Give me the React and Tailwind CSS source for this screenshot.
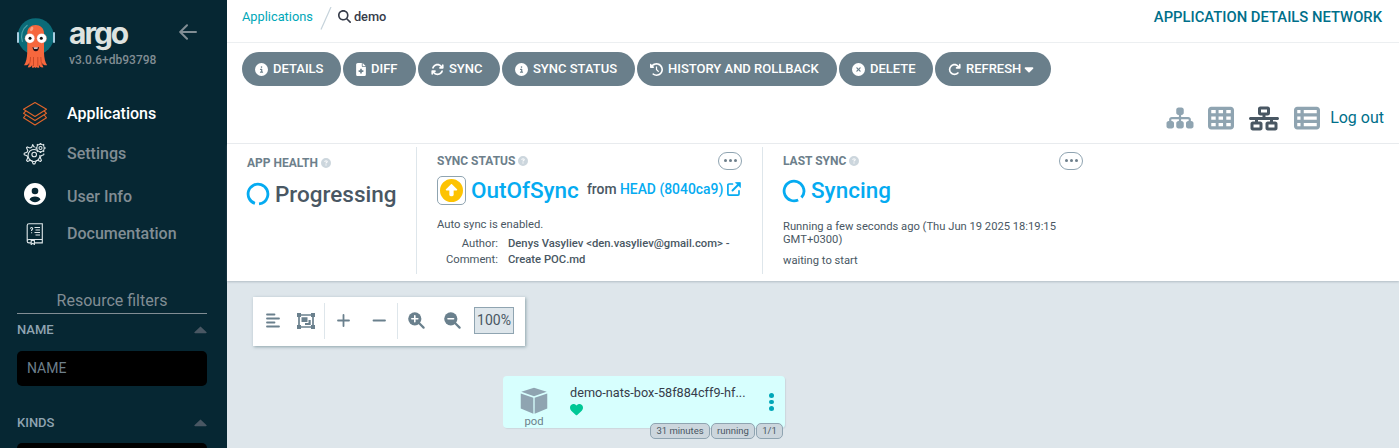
import React from 'react';
import {
  FaCircleInfo, FaFileMedical, FaArrowsRotate, FaClockRotateLeft, FaCircleXmark,
  FaArrowRotateRight, FaCaretDown, FaSitemap, FaTableCells, FaNetworkWired, FaTableList,
  FaMagnifyingGlass, FaHeart, FaCircleQuestion, FaCircleUp,
} from 'react-icons/fa6';

function Mascot() {
  return (
    <svg width="40" height="52" viewBox="0 0 40 52" className="shrink-0">
      <circle cx="19.700" cy="19.400" r="18.200" fill="#0b6b78" />
      <path d="M6.500 25a14.500 14.500 0 0 1 5-17" fill="none" stroke="#4ba0a8" strokeWidth="1.200" />
      <rect x="1" y="15" width="2" height="11" rx="1" fill="#a9cde0" />
      <rect x="37" y="15" width="2" height="11" rx="1" fill="#a9cde0" />
      <path d="M11.300 16C11.300 11 15 8 19.600 8s8.400 3 8.400 8v20c.2 5 1 9 3.200 12.200-2.500.5-4.200-.4-5-2.200.1 2 .5 3 1.300 4.300-2.500.4-3.700-.6-4.500-2.600 0 1.200.1 2 .3 2.900-1.200.4-2.300.2-2.900-.6-.2.800-.3.900-.8.900s-.6-.1-.8-.9c-.6.8-1.700 1-2.900.6.200-.9.3-1.700.3-2.900-.8 2-2 3-4.500 2.600.8-1.300 1.200-2.300 1.300-4.300-.8 1.800-2.500 2.700-5 2.200 2.200-3.200 3-7.200 3.200-12.200z" fill="#f6673d" />
      <path d="M14.500 40q0 5-1.300 8M17.500 40v9M21.800 40v9M24.800 40q0 5 1.300 8" fill="none" stroke="#b83c20" strokeWidth="0.700" />
      <ellipse cx="15.700" cy="12" rx="1.400" ry="2.300" transform="rotate(30 15.700 12)" fill="#fca184" />
      <circle cx="13.800" cy="21.300" r="4.900" fill="#fff" stroke="#d9583a" strokeWidth="0.300" />
      <circle cx="25.700" cy="21.300" r="4.900" fill="#fff" stroke="#d9583a" strokeWidth="0.300" />
      <circle cx="14" cy="21.300" r="1.500" fill="#111" />
      <circle cx="25.300" cy="21.300" r="1.500" fill="#111" />
      <path d="M16.500 30q3.200 1.500 6.500 0-.3 4.200-3.200 4.200-2.800 0-3.300-4.200z" fill="#201018" />
      <path d="M17.500 30.400h4.500l-.6 1.300h-3.300z" fill="#fff" />
    </svg>
  );
}

function LayersIcon() {
  return (
    <svg width="26" height="26" viewBox="0 0 26 26" fill="none" stroke="#e0642a" strokeWidth="1.100" strokeLinejoin="round">
      <path d="M13 1.500 24.500 8.300 13 15.500 1.500 8.300z" />
      <path d="M3.800 10 1.500 12.300 13 19.500l11.500-7.200L22.200 10" />
      <path d="M3.800 14 1.500 16.800 13 24l11.500-7.200L22.200 14" />
    </svg>
  );
}

function GearsIcon() {
  return (
    <svg width="24" height="24" viewBox="0 0 24 24" fill="none" stroke="#dfe8ea" strokeWidth="1.100" strokeLinejoin="round">
      <path d="M12 5 10.800 4.800 9.700 2.600 8.700 5.200 7 6 4.300 4.900 3.500 5.700 4.800 8.500 4 10.300 1.200 11.300v1.500L4 13.800l.8 1.900-1.300 2.700 1.100 1.100 2.700-1.200 1.800.8 1 2.800h1.800l1-2.800 1.800-.8 2.700 1.200 1.100-1.100-1.200-2.700.8-1.900 2.700-1v-1.300" />
      <path d="M14.200 8.400A6 6 0 1 0 17 13" />
      <circle cx="11.200" cy="12.500" r="2.300" />
      <circle cx="17.500" cy="6" r="1.500" />
      <circle cx="17.500" cy="6" r="3.700" />
      <path strokeWidth="1.600" d="M17.500.9v1.400M17.500 9.700v1.400M12.400 6h1.400M21.200 6h1.400M13.900 2.400l1 1M20.100 8.600l1 1M21.100 2.400l-1 1M14.900 8.600l-1 1" />
    </svg>
  );
}

function UserIcon() {
  return (
    <svg width="22" height="22" viewBox="0 0 22 22">
      <circle cx="11" cy="11" r="11" fill="#fff" />
      <circle cx="11" cy="8" r="3.300" fill="#062733" />
      <path d="M5.500 16.600C6 14.500 8.600 13.500 11 13.500s5 1 5.500 3.100C15 18.300 13 19.200 11 19.200s-4-.9-5.500-2.600z" fill="#062733" />
    </svg>
  );
}

function BookIcon() {
  return (
    <svg width="18" height="22" viewBox="0 0 18 22" fill="none" stroke="#dfe8ea" strokeWidth="1.100">
      <path d="M1.200 18.500V2.500Q1.200.8 3 .8h13.300v15.700H3q-1.800 0-1.800 1.700 0 1.700 1.800 1.700h2M8.500 19.900h7.800v-3.400M5.200 17.500v4l1.600-1.100 1.600 1.100v-4z" />
      <path d="M8.500 4.500H14M9.500 7H14M8.500 9.500H14M9.500 12H14" />
      <path d="M4.500 5.700q0-1.200 1.100-1.200t1.100 1.100q0 .9-1.100 1.500v1M5.600 9.200v1.100" />
    </svg>
  );
}

function BackArrow() {
  return (
    <svg width="18" height="16" viewBox="0 0 18 16" fill="none" stroke="#818d94" strokeWidth="2" strokeLinecap="round" strokeLinejoin="round">
      <path d="M17 8H1.500M8 1.200 1.200 8 8 14.800" />
    </svg>
  );
}

const Up = () => (
  <svg width="13" height="8" viewBox="0 0 13 8"><path d="M6.500.4 12.400 6q.8 1.200-.6 1.200H1.200Q-.2 7.200.6 6z" fill="#495763" /></svg>
);

const Spinner = ({ gap }) => (
  <svg width="24" height="24" viewBox="0 0 24 24" fill="none" className="shrink-0">
    <circle cx="12" cy="12" r="9.900" stroke="#05abf1" strokeWidth="2.800" strokeDasharray="57.700 4.500" transform={`rotate(${gap} 12 12)`} />
  </svg>
);

function OpenIcon() {
  return (
    <svg width="14" height="14" viewBox="0 0 14 14" fill="none" stroke="#05abf1" strokeWidth="1.700" strokeLinecap="round" strokeLinejoin="round">
      <path d="M5.500 2H2Q.9 2 .9 3.100V12q0 1.100 1.100 1.100h8.900Q12 13.100 12 12V8.800" />
      <path d="M5.500 8.500 12 2" strokeWidth="1.900" />
      <path d="M8.800.6h4.600v4.600z" fill="#05abf1" strokeWidth=".8" />
    </svg>
  );
}

function ZoomIcon({ plus }) {
  return (
    <svg width="17" height="17" viewBox="0 0 17 17" fill="none" strokeLinecap="round">
      <circle cx="6.800" cy="6.800" r="6.600" fill="#6a808d" />
      <path d="m11 11 4.600 4.600" stroke="#6a808d" strokeWidth="2.200" />
      <path d={plus ? 'M3.800 6.800h6M6.800 3.800v6' : 'M4 6.800h5.600'} stroke="#fff" strokeWidth="1.600" />
    </svg>
  );
}

const Cube = () => (
  <svg width="30" height="30" viewBox="0 0 30 30" fill="#8fa4b1">
    <path d="M15 .8 28.600 5.200 15 9.800 1.400 5.200z" />
    <path d="M.8 7 14.300 11.400v17.300L.8 23z" />
    <path d="M29.200 7 15.700 11.400v17.300L29.200 23z" />
  </svg>
);

const Ellipsis = () => (
  <span className="flex h-[18px] w-6 items-center justify-center gap-[2px] rounded-full border border-[#8fa4b1]">
    <i className="size-[3px] rounded-full bg-[#6d7f8b]" />
    <i className="size-[3px] rounded-full bg-[#6d7f8b]" />
    <i className="size-[3px] rounded-full bg-[#6d7f8b]" />
  </span>
);

const Heading = ({ children }) => (
  <span className="flex items-center gap-[3px] text-[12px] leading-[14px] font-bold text-[#6d7f8b]">
    {children}
    <FaCircleQuestion className="size-[10px] text-[#ccd6dd]" />
  </span>
);

function Button({ icon: Icon, label, width, iconClass = 'w-[13px]', caret }) {
  return (
    <button className={`flex h-[34px] shrink-0 items-center rounded-full bg-[#6a7f8b] pl-[13px] text-[13px] font-medium text-white ${width}`}>
      <Icon className={`mr-[5px] h-[13px] shrink-0 ${iconClass}`} />
      <span className="whitespace-nowrap">{label}</span>
      {caret && <FaCaretDown className="ml-[1px] size-[14px]" />}
    </button>
  );
}

const NavItem = ({ icon, label, active, className }) => (
  <div className={`flex shrink-0 items-center ${className}`}>
    <span className="flex w-[70px] justify-center">{icon}</span>
    <span className={`-ml-[3px] text-[16px] font-medium ${active ? 'text-white' : 'text-[#818d94]'}`}>{label}</span>
  </div>
);

function Sidebar() {
  return (
    <aside className="flex h-[448px] w-[227px] shrink-0 flex-col overflow-hidden bg-[#062733]">
      <div className="flex h-[94px] shrink-0 pt-[17px] pl-4">
        <Mascot />
        <div className="ml-[13px] flex w-[110px] flex-col">
          <span className="h-[36px] font-[Inter] text-[30px] leading-[33px] font-bold tracking-[-2px] text-[#dee3e0]">argo</span>
          <span className="text-[12px] leading-[14px] font-medium text-[#818d94]">v3.0.6+db93798</span>
        </div>
        <div className="pt-[7px]"><BackArrow /></div>
      </div>
      <NavItem className="h-[40px]" icon={<LayersIcon />} label="Applications" active />
      <NavItem className="h-[40px]" icon={<GearsIcon />} label="Settings" />
      <NavItem className="h-[45px]" icon={<span className="-mt-[5px]"><UserIcon /></span>} label="User Info" />
      <NavItem className="h-[29px]" icon={<BookIcon />} label="Documentation" />
      <div className="mr-[20px] ml-[17px] mt-[43px] flex h-[23px] shrink-0 justify-center border-b border-[#818d94] text-[16px] leading-[20px] text-[#818d94]">Resource filters</div>
      <div className="mr-[20px] ml-[17px] flex h-[31px] shrink-0 items-center justify-between text-[13px] font-medium text-[#8fa4b1]">NAME <Up /></div>
      <div className="mr-[20px] ml-[17px] mt-[6px] flex h-[35px] shrink-0 items-center rounded-[5px] bg-black pl-[10px] text-[14px] text-[#6d7f8b]">NAME</div>
      <div className="mr-[20px] ml-[17px] mt-[21px] flex h-[31px] shrink-0 items-center justify-between text-[13px] font-medium text-[#8fa4b1]">KINDS <Up /></div>
      <div className="mr-[20px] ml-[17px] mt-[5px] h-[35px] shrink-0 rounded-[5px] bg-black" />
    </aside>
  );
}

function StatusBar() {
  return (
    <section className="z-10 flex h-[137px] shrink-0 bg-white pt-[3px] pb-[7px] text-[#495763] shadow-[0_1px_2px_rgba(109,127,139,0.4)]">
      <div className="w-[190px] border-r border-[#dee6eb] pt-[9px] pl-5">
        <Heading>APP HEALTH</Heading>
        <div className="mt-[10px] -ml-[1px] flex h-[28px] items-center gap-[5px] text-[22.500px] leading-[28px] font-medium"><Spinner gap={108} />Progressing</div>
      </div>
      <div className="w-[346px] border-r border-[#dee6eb] pt-[4px] pr-5 pl-5">
        <div className="flex h-[19px] items-center justify-between"><Heading>SYNC STATUS</Heading><Ellipsis /></div>
        <div className="mt-[6px] flex h-[29px] items-center">
          <span className="flex size-[29px] shrink-0 items-center justify-center rounded-[5px] border border-[#8fa4b1]"><FaCircleUp className="size-[23px] text-[#fdc302]" /></span>
          <span className="ml-[5px] text-[22.500px] font-medium text-[#05abf1]">OutOfSync</span>
          <span className="-mt-[2px] ml-[8px] flex shrink-0 items-center text-[13.900px] font-medium whitespace-pre">from <span className="mr-[4px] text-[#05abf1]">HEAD (8040ca9)</span><OpenIcon /></span>
        </div>
        <div className="mt-[13px] text-[11.250px] leading-[14px]">Auto sync is enabled.</div>
        <div className="mt-[4px] grid grid-cols-[61px_1fr] gap-x-[10px] text-[11.250px] leading-[16px] whitespace-nowrap">
          <span className="text-right">Author:</span><span className="font-medium">Denys Vasyliev &lt;den.vasyliev@gmail.com&gt; -</span>
          <span className="text-right">Comment:</span><span className="font-medium">Create POC.md</span>
        </div>
      </div>
      <div className="w-[340px] pt-[4px] pr-5 pl-5">
        <div className="flex h-[19px] items-center justify-between"><Heading>LAST SYNC</Heading><Ellipsis /></div>
        <div className="mt-[6px] -ml-[1px] flex h-[29px] items-center gap-[5px] text-[22.500px] font-medium text-[#05abf1]"><Spinner gap={65} />Syncing</div>
        <div className="mt-[15px] text-[11.200px] leading-[13px]">Running a few seconds ago (Thu Jun 19 2025 18:19:15<br />GMT+0300)</div>
        <div className="mt-[8px] text-[11.200px] leading-[14px]">waiting to start</div>
      </div>
    </section>
  );
}

function Toolbar() {
  return (
    <div className="mt-[16px] ml-[26px] flex h-[49px] w-[272px] items-center bg-white pb-[2px] text-[#6a808d] shadow-[1px_1px_3px_rgba(90,120,130,0.6)]">
      <div className="flex h-[36px] w-[72px] items-center border-r border-[#dee6eb] pl-[13px]">
        <svg width="14" height="15" viewBox="0 0 14 15" stroke="#6a808d" strokeWidth="1.800" strokeLinecap="round"><path d="M1 1.500h7.500M1 5.500h12M1 9.500h7.500M1 13.500h12" /></svg>
        <svg className="ml-[17px]" width="18" height="16" viewBox="0 0 18 16" fill="#6a808d"><path fill="none" stroke="#6a808d" strokeWidth="1.700" d="M2 2h14v12H2z" /><path d="M0 0h4v4H0zM14 0h4v4h-4zM0 12h4v4H0zM14 12h4v4h-4zM4.500 4.300h6v4.800h-6zM11.500 7h2.200v5H8v-2h3.500z" /></svg>
      </div>
      <div className="flex h-[36px] w-[73px] items-center border-r border-[#dee6eb] pl-[12px]">
        <svg width="50" height="13" viewBox="0 0 50 13" stroke="#6a808d" strokeWidth="1.800" strokeLinecap="round"><path d="M1 6.500h11M6.500 1v11M36.500 6.500H48" /></svg>
      </div>
      <div className="ml-[10px] flex items-center"><ZoomIcon plus /><span className="w-[19px]" /><ZoomIcon /></div>
      <div className="ml-[13px] flex h-[27px] w-[40px] items-center justify-center border border-[#8fa4b1] bg-[#dee6eb] text-[14px] text-[#495763]">100%</div>
    </div>
  );
}

const Tag = ({ children, width }) => (
  <span className={`flex h-[16px] items-center justify-center rounded-[5px] border border-[#8fa4b1] bg-[#ccd6dd] text-[9.500px] whitespace-nowrap text-[#495763] ${width}`}>{children}</span>
);

function PodNode() {
  return (
    <div className="absolute top-[95px] left-[276px] flex h-[52px] w-[282px] rounded-[4px] bg-[#d7fffe] shadow-[1px_1px_1px_#ccd6dd]">
      <div className="flex w-[62px] flex-col items-center pt-[11px] text-[11.250px] leading-[13px] text-[#6d7f8b]"><Cube /><span>pod</span></div>
      <div className="ml-[5px] w-[190px] pt-[8px]">
        <div className="text-[12.700px] leading-[18px] whitespace-nowrap text-[#363c4a]">demo-nats-box-58f884cff9-hf...</div>
        <FaHeart className="mt-[1px] size-[13px] text-[#00c896]" />
      </div>
      <div className="ml-[9px] flex flex-col gap-[2px] pt-[17px]">
        <i className="size-[4.500px] rounded-full bg-[#00a7b8]" /><i className="size-[4.500px] rounded-full bg-[#00a7b8]" /><i className="size-[4.500px] rounded-full bg-[#00a7b8]" />
      </div>
      <div className="absolute top-[47px] right-[2px] flex gap-[1px]"><Tag width="w-[60px]">31 minutes</Tag><Tag width="w-[44px]">running</Tag><Tag width="w-[27px]">1/1</Tag></div>
    </div>
  );
}

export default function App() {
  return (
    <div className="flex h-[448px] w-[1399px] overflow-hidden bg-white font-[Roboto,sans-serif]">
      <Sidebar />
      <main className="flex min-w-0 flex-1 flex-col">
        <header className="flex h-[43px] shrink-0 items-start justify-between border-b border-[#eceff1] pr-[17px] pl-[15px]">
          <div className="flex h-[33px] items-center text-[12.800px]">
            <span className="text-[#00a7b8]">Applications</span>
            <svg className="mx-[7px] mt-[3px]" width="12" height="23" viewBox="0 0 12 23"><path d="M11 0 1 22.500" stroke="#c6d3db" strokeWidth="1.200" /></svg>
            <FaMagnifyingGlass className="mr-[3px] -ml-[1px] size-[13px] text-[#363c4a]" />
            <span className="font-medium text-[#363c4a]">demo</span>
          </div>
          <h1 className="text-[14.800px] leading-[34px] font-medium text-[#006f8a]">APPLICATION DETAILS NETWORK</h1>
        </header>
        <div className="flex h-[101px] shrink-0 flex-col justify-between border-b border-[#eceff1] pt-[9px] pr-[15px] pb-[11px] pl-[15px]">
          <div className="flex gap-[2px]">
            <Button icon={FaCircleInfo} label="DETAILS" width="w-[99px]" />
            <Button icon={FaFileMedical} label="DIFF" width="w-[73px]" iconClass="w-[10px]" />
            <Button icon={FaArrowsRotate} label="SYNC" width="w-[82px]" />
            <Button icon={FaCircleInfo} label="SYNC STATUS" width="w-[133px]" />
            <Button icon={FaClockRotateLeft} label="HISTORY AND ROLLBACK" width="w-[200px]" />
            <Button icon={FaCircleXmark} label="DELETE" width="w-[94px]" />
            <Button icon={FaArrowRotateRight} label="REFRESH" width="w-[116px]" caret />
          </div>
          <div className="flex h-[28px] items-center justify-end text-[#8fa4b1]">
            <FaSitemap className="mr-[14px] h-[24px] w-[28px]" />
            <FaTableCells className="mr-[15px] size-[26px]" />
            <FaNetworkWired className="mr-[15px] h-[25px] w-[30px] text-[#495763]" />
            <FaTableList className="mr-[10px] size-[26px]" />
            <span className="text-[16px] text-[#006f8a]">Log out</span>
          </div>
        </div>
        <StatusBar />
        <div className="relative flex flex-1 flex-col bg-[#dee6eb]">
          <Toolbar />
          <PodNode />
        </div>
      </main>
    </div>
  );
}
